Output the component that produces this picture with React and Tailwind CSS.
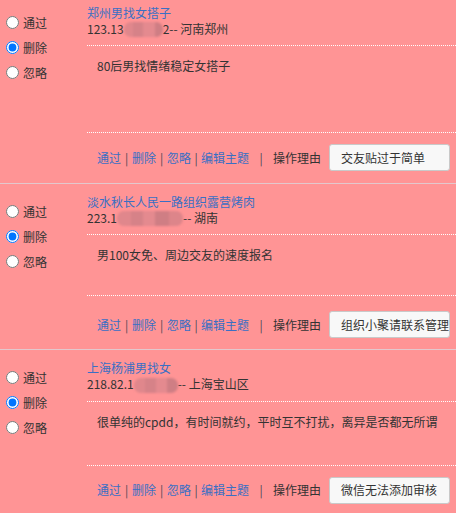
import React from "react";

const rows = [
  {
    title: "郑州男找女搭子",
    ipA: "123.13",
    blur: [9, 10, 12, 8],
    ipB: "2-- 河南郑州",
    body: "80后男找情绪稳定女搭子",
    reason: "交友贴过于简单",
    pt: "pt-[5px]",
    rpt: "pt-[10px]",
    bodyH: "h-[86px]",
    fpt: "pt-[11px]",
    fpb: "pb-[12px]",
    border: true,
  },
  {
    title: "淡水秋长人民一路组织露营烤肉",
    ipA: "223.1",
    blur: [14, 12, 12, 14, 14],
    ipB: "-- 湖南",
    body: "男100女免、周边交友的速度报名",
    reason: "组织小聚请联系管理员",
    pt: "pt-[10px]",
    rpt: "pt-[15px]",
    bodyH: "h-[60px]",
    fpt: "pt-[15px]",
    fpb: "pb-[11px]",
    border: true,
  },
  {
    title: "上海杨浦男找女",
    ipA: "218.82.1",
    blur: [11, 11, 11, 11],
    ipB: "-- 上海宝山区",
    body: "很单纯的cpdd，有时间就约，平时互不打扰，离异是否都无所谓",
    reason: "微信无法添加审核",
    pt: "pt-[10px]",
    rpt: "pt-[15px]",
    bodyH: "h-[63px]",
    fpt: "pt-[11px]",
    fpb: "pb-[11px]",
    border: false,
  },
];

const shades = ["bg-[#e0878c]", "bg-[#d68288]", "bg-[#e48a8f]", "bg-[#cf7e84]", "bg-[#dd858a]"];

function Blur({ widths }) {
  return (
    <span className="inline-flex h-[15px] align-middle overflow-hidden rounded-[7px] blur-[1px] -mt-[2px]">
      {widths.map((w, i) => (
        <span key={i} style={{ width: w }} className={`h-full ${shades[i % shades.length]}`} />
      ))}
    </span>
  );
}

function Row({ r, idx }) {
  const opts = ["通过", "删除", "忽略"];
  return (
    <div className={`flex ${r.border ? "border-b border-[#e3c8cd]" : ""}`}>
      <div className={`w-[87px] shrink-0 ${r.rpt}`}>
        {opts.map((o) => (
          <label key={o} className="flex items-center h-[25px]">
            <input
              type="radio"
              name={`act${idx}`}
              defaultChecked={o === "删除"}
              className="m-0 ml-[6px] w-[13px] h-[13px]"
            />
            <span className="ml-[4px]">{o}</span>
          </label>
        ))}
      </div>
      <div className={`flex-1 min-w-0 ${r.pt}`}>
        <div className="text-[#3a6fc4]">{r.title}</div>
        <div className="whitespace-nowrap">
          {r.ipA}
          <Blur widths={r.blur} />
          {r.ipB}
        </div>
        <div className="mt-[8px] border-t border-dotted border-white" />
        <div className={`${r.bodyH} pl-[10px] pt-[12px]`}>{r.body}</div>
        <div className="border-t border-dotted border-white" />
        <div className={`flex items-center pl-[10px] ${r.fpt} ${r.fpb}`}>
          <span className="text-[#3a6fc4]">通过</span>
          <span className="inline-block w-[11px] text-center text-[#4a4a55]">|</span>
          <span className="text-[#3a6fc4]">删除</span>
          <span className="inline-block w-[11px] text-center text-[#4a4a55]">|</span>
          <span className="text-[#3a6fc4]">忽略</span>
          <span className="inline-block w-[10px] text-center text-[#4a4a55]">|</span>
          <span className="text-[#3a6fc4]">编辑主题</span>
          <span className="inline-block w-[24px] text-center text-[#4a4a55]">|</span>
          <span>操作理由</span>
          <div className="ml-[8px] w-[121px] h-[27px] shrink-0 flex items-center overflow-hidden whitespace-nowrap rounded-[3px] border border-[#c9c9c9] bg-[#f8f8f8] pl-[11px] pr-[2px]">
            {r.reason}
          </div>
        </div>
      </div>
    </div>
  );
}

export default function App() {
  return (
    <div
      className="min-h-[513px] bg-[#ff9495] text-[12px] leading-[16px] text-[#333]"
      style={{ fontFamily: '"Microsoft YaHei", "Noto Sans CJK SC", sans-serif' }}
    >
      {rows.map((r, i) => (
        <Row key={i} r={r} idx={i} />
      ))}
    </div>
  );
}
